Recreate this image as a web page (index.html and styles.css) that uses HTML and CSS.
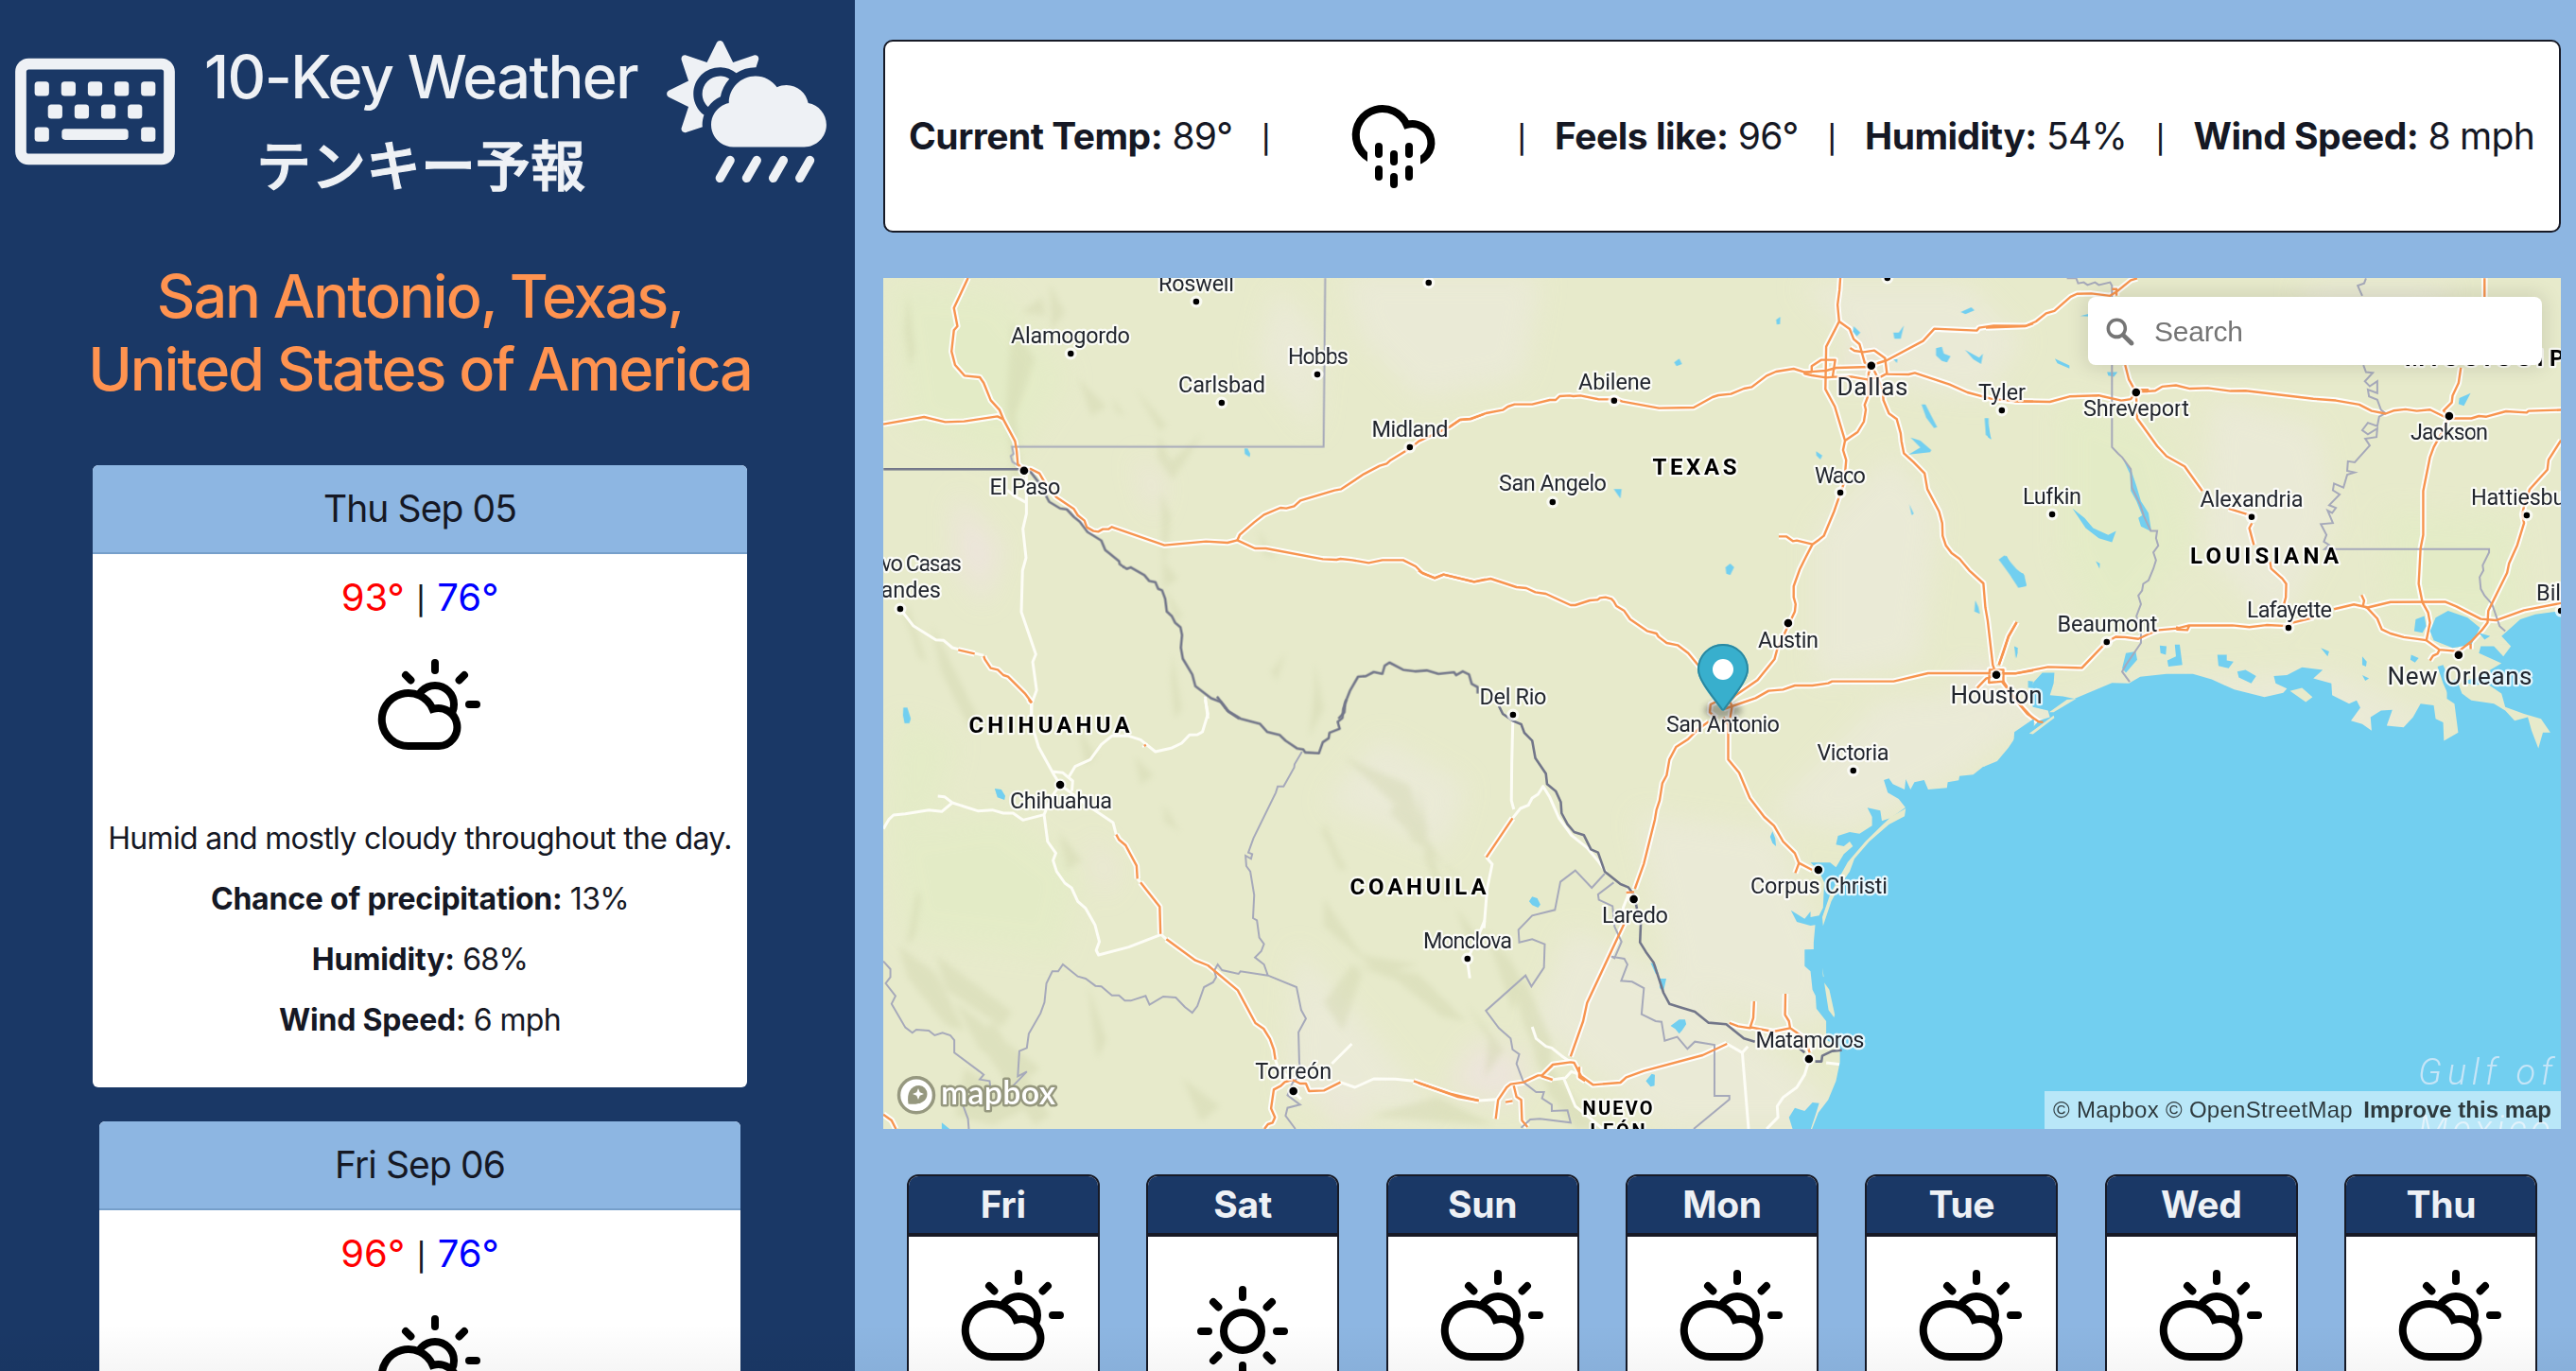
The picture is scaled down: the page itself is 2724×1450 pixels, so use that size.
FILE: index.html
```html
<!DOCTYPE html>
<html lang="en">
<head>
<meta charset="utf-8">
<title>10-Key Weather</title>
<link rel="stylesheet" href="styles.css">
</head>
<body>
<svg class="sprite" width="0" height="0" aria-hidden="true">
  <symbol id="cloud-sun" viewBox="0 0 200 200">
    <g transform="translate(56 35)" fill="none" stroke="#000" stroke-width="8" stroke-linecap="round">
      <circle cx="60" cy="48" r="20"/>
      <path d="M60 4v8M96 48h8M29 17l5.4 5.4M91 17l-5.4 5.4"/>
      <path fill="#fff" d="M32 92A28 28 0 1 1 57.5 52.9A20 20 0 1 1 64 92Z"/>
    </g>
  </symbol>
  <symbol id="sun" viewBox="0 0 200 200">
    <g fill="none" stroke="#000" stroke-width="8" stroke-linecap="round">
      <circle cx="100" cy="100" r="20"/>
      <path d="M100 56v8M100 136v8M56 100h8M136 100h8M69 69l5.4 5.4M131 69l-5.4 5.4M69 131l5.4-5.4M131 131l-5.4-5.4"/>
    </g>
  </symbol>
  <symbol id="rain" viewBox="0 0 200 200">
    <g transform="translate(56 67)" fill="none" stroke="#000" stroke-width="8" stroke-linecap="round">
      <path d="M32 60A28 28 0 1 1 57.5 20.9A20 20 0 1 1 64 60"/>
      <path fill="#fff" stroke="none" d="M16 42h56v30H16z"/>
      <path d="M28 44v8M60 44v8M44 52v8M28 68v8M60 68v8M44 76v8"/>
    </g>
  </symbol>
</svg>

<div class="app">
  <aside class="sidebar">
    <header class="brand">
      <svg class="brand-icon" viewBox="0 0 576 512">
        <path fill-rule="evenodd" d="M528 64H48C21.5 64 0 85.500 0 112v288c0 26.500 21.500 48 48 48h480c26.500 0 48-21.500 48-48V112c0-26.500-21.500-48-48-48zm8 336c0 4.400-3.600 8-8 8H48c-4.400 0-8-3.600-8-8V112c0-4.400 3.600-8 8-8h480c4.400 0 8 3.600 8 8v288z"/>
        <rect x="70" y="148" width="52" height="52" rx="12"/><rect x="166" y="148" width="52" height="52" rx="12"/><rect x="262" y="148" width="52" height="52" rx="12"/><rect x="358" y="148" width="52" height="52" rx="12"/><rect x="454" y="148" width="52" height="52" rx="12"/>
        <rect x="118" y="230" width="52" height="52" rx="12"/><rect x="214" y="230" width="52" height="52" rx="12"/><rect x="310" y="230" width="52" height="52" rx="12"/><rect x="406" y="230" width="52" height="52" rx="12"/>
        <rect x="70" y="312" width="52" height="52" rx="12"/><rect x="168" y="318" width="240" height="40" rx="12"/><rect x="454" y="312" width="52" height="52" rx="12"/>
      </svg>
      <div class="brand-title">
        <h1>10-Key Weather</h1>
        <h2 lang="ja">テンキー予報</h2>
      </div>
      <svg class="brand-icon" viewBox="0 0 576 512">
        <path d="M510.500 225.500c-6.900-37.200-39.300-65.500-78.500-65.500-12.300 0-23.900 3-34.300 8-17.400-24.100-45.600-40-77.700-40-53 0-96 43-96 96 0 .5.2 1.100.2 1.600C187.600 233 160 265.200 160 304c0 44.200 35.800 80 80 80h256c44.200 0 80-35.800 80-80 0-39.200-28.200-71.700-65.500-78.500zm-386.400 34.400c-37.400-37.400-37.400-98.300 0-135.800 34.600-34.600 89.100-36.800 126.700-7.400 20-12.900 43.600-20.700 69.200-20.700.7 0 1.300.2 2 .2l8.900-26.700c3.400-10.200-6.300-19.800-16.500-16.400l-75.300 25.100-35.500-71c-4.800-9.600-18.500-9.600-23.300 0l-35.500 71-75.300-25.100c-10.200-3.400-19.800 6.300-16.400 16.500l25.100 75.300-71 35.500c-9.600 4.800-9.600 18.500 0 23.300l71 35.500-25.100 75.300c-3.400 10.200 6.300 19.800 16.500 16.500l59.200-19.700c-.2-2.400-.7-4.700-.7-7.200 0-12.500 2.300-24.500 6.200-35.900-3.600-2.700-7.100-5.200-10.200-8.300zm69.800-58c4.300-24.500 15.800-46.400 31.900-64-9.800-6.200-21.400-9.900-33.800-9.900-35.300 0-64 28.700-64 64 0 18.700 8.200 35.400 21.100 47.100 11.300-15.900 26.600-28.900 44.800-37.200z"/>
        <path fill="none" stroke="#eef1f5" stroke-width="32" stroke-linecap="round" d="M516.600 432l-36.600 64M420.600 432l-36.600 64M324.600 432l-36.600 64M228.600 432l-36.600 64"/>
      </svg>
    </header>
    <h2 class="city">San Antonio, Texas,<br>United States of America</h2>
    <article class="card">
      <div class="card-date">Thu Sep 05</div>
      <div class="card-body">
        <p class="temps"><span class="hi">93°</span> <i>|</i> <span class="lo">76°</span></p>
        <svg class="weather"><use href="#cloud-sun"/></svg>
        <p>Humid and mostly cloudy throughout the day.</p>
        <p><b>Chance of precipitation:</b> 13%</p>
        <p><b>Humidity:</b> 68%</p>
        <p><b>Wind Speed:</b> 6 mph</p>
      </div>
    </article>
    <article class="card card-small">
      <div class="card-date">Fri Sep 06</div>
      <div class="card-body">
        <p class="temps"><span class="hi">96°</span> <i>|</i> <span class="lo">76°</span></p>
        <svg class="weather"><use href="#cloud-sun"/></svg>
      </div>
    </article>
  </aside>

  <main class="main">
    <section class="current">
      <span><b>Current Temp:</b> 89°</span><i>|</i>
      <svg class="weather"><use href="#rain"/></svg><i>|</i>
      <span><b>Feels like:</b> 96°</span><i>|</i>
      <span><b>Humidity:</b> 54%</span><i>|</i>
      <span><b>Wind Speed:</b> 8 mph</span>
    </section>

    <section class="map">
      <svg class="map-canvas" viewBox="934 294 1774 900">
        <defs>
          <filter id="soft" x="-20%" y="-20%" width="140%" height="140%"><feGaussianBlur stdDeviation="14"/></filter>
          <filter id="shade" x="-20%" y="-20%" width="140%" height="140%"><feGaussianBlur stdDeviation="3"/></filter>
          <filter id="small-soft" x="-50%" y="-50%" width="200%" height="200%"><feGaussianBlur stdDeviation="3"/></filter>
          <g id="highways">
            <g transform="translate(920 280) scale(.41454 .33333)">
              <path d="M250 42L232 90 214 137 223 195 214 208 208 275 217 318 241 352 280 357 290 375 308 430 330 460 340 490 370 560 374 590 377 633 393 650 410 648 432 662 450 700 475 737 520 775 530 795 547 812 553 833 570 845 582 847 594 839 608 839 617 832 751 890 857 878 912 882 937 874 982 900 1010 900 1155 934 1190 936 1200 933 1230 937 1272 946 1307 937 1360 937 1392 957 1408 977 1440 994 1463 983 1540 1006 1570 998"/>
              <path d="M34 506L138 483 192 499 240 497 325 481 340 490"/>
              <path d="M937 874L943 857 980 817 1005 793 1047 771 1062 773 1082 766 1098 748 1185 716 1202 712 1260 664 1300 638 1318 631 1328 620 1377 583 1400 560 1480 514 1505 492 1532 489 1568 473"/>
              <path d="M225 1222L267 1234M290 1242L293 1252 308 1280 326 1285 340 1302 352 1307 395 1360 413 1390"/>
            </g>
            <g transform="translate(1500 280) scale(.41454 .33333)">
              <path d="M80 514L106 492 135 489 172 471 215 461 228 450 245 443 290 443 335 429 350 429 360 417 385 415 395 417 413 415 460 427 485 427 499 424 520 434 613 455 702 453 750 420 765 414 797 410 830 393 850 388 888 352 912 339 957 330 985 341 1040 336 1065 327 1155 324"/>
              <path d="M0 970L12 980 42 994 64 983 143 1006 184 996 250 1023 275 1026 298 1039 325 1044 388 1080 400 1080 437 1065 457 1063 463 1057 477 1055 492 1060 498 1068 505 1083 524 1097 540 1125 583 1162 607 1170 612 1180 633 1200 661 1207 688 1232 720 1280 765 1390"/>
              <path d="M1076 42L1074 80 1069 127 1073 180 1040 260 1038 395 1062 450 1088 558 1083 588 1091 620 1086 690 1060 783 1034 860 1022 872 1005 887 987 930 973 965 957 1020 957 1055 962 1077 960 1100 943 1145 915 1220 908 1252 865 1318 810 1365 778 1405"/>
              <path d="M1073 180L1100 204 1110 236 1125 252 1138 310 1155 322 1148 345 1148 412 1138 445 1141 460 1136 498 1120 531 1088 558"/>
              <path d="M1155 320L1172 312 1195 303 1287 242 1316 203 1424 209 1430 200 1467 193 1550 194 1568 186"/>
              <path d="M1101 264L1112 273 1135 277 1163 272 1190 296 1195 345 1180 355 1145 364 1104 355 1060 356 1040 358 1003 351 985 346 985 341 1003 340 1003 322 1027 302 1063 302 1056 358M1195 347L1250 348 1266 343 1355 380 1400 405 1460 425 1530 434 1568 434"/>
              <path d="M1155 320L1166 345 1184 395 1186 430 1200 472 1220 490 1230 535 1232 560 1238 598 1262 625 1291 662 1298 712 1328 783 1336 820 1337 860 1345 890 1360 915 1380 933 1405 970 1441 1011 1446 1087 1452 1130 1465 1270 1474 1300M1480 1270L1492 1230 1505 1180 1526 1134"/>
              <path d="M919 862L938 862 955 877 965 875 1005 887"/>
              <path d="M778 1410L860 1375 893 1352 930 1348 960 1335 1005 1335 1045 1328 1055 1322 1212 1322 1300 1296 1450 1296 1474 1297 1522 1297 1568 1287M1457 1285H1492V1322L1455 1326ZM1474 1300L1448 1313 1425 1343M1488 1322L1530 1390 1568 1440"/>
              <path d="M765 1383L745 1395 743 1420 760 1438M790 1378L800 1400 795 1438"/>
            </g>
            <g transform="translate(2100 280) scale(.39796 .35714)">
              <path d="M0 186L105 182 133 168 160 144 182 137 225 95 242 86 280 85 330 92 347 80 385 46 402 40M347 92V72H335M1325 40V95M370 297L380 340 399 378 402 455 455 537 480 567 528 597 575 670"/>
              <path d="M75 404L170 406 222 390 300 387 360 402 385 398 399 376 430 375 450 373 468 361 505 357 542 367 590 365 650 374 690 373 870 397 930 402 992 414 1025 433 1062 441 1083 432 1115 428 1145 433 1180 429 1218 450 1240 455 1290 455 1310 448 1330 450 1382 434 1437 438 1442 433 1528 430M399 370L430 370 430 377"/>
              <path d="M1262 305L1256 350 1240 388 1238 408 1216 432 1231 450 1210 500 1190 540 1180 570 1162 670 1162 800 1155 840 1150 945 1160 1000 1175 1030 1180 1060 1170 1115"/>
              <path d="M1528 520L1495 578 1492 607 1445 665 1430 715 1425 740 1430 765 1412 830 1390 885 1385 912 1335 1025 1333 1060 1318 1082 1290 1115 1256 1145M1288 1122V1138"/>
              <path d="M645 722L706 743M707 765L700 780 712 830M755 880L758 900 788 930 798 945 797 985 792 1005M804 1070L815 1060 870 1045M925 1020L978 1006 1015 1015 1075 999 1220 998 1250 1012 1315 1049 1355 1053 1430 1023 1528 1002M998 978L1005 995 1002 1010 1015 1018 1040 1048 1052 1080 1075 1092 1110 1103 1170 1112 1205 1140 1256 1145M1205 1140L1200 1152 1188 1158 1180 1172"/>
              <path d="M27 1210L80 1210 165 1191 255 1194 321 1117 345 1102 370 1103 405 1108 435 1092 460 1082 508 1077 540 1068 655 1068 700 1073 745 1067 804 1070M508 1071V1080L535 1082 540 1070M35 1185L45 1150 60 1100 82 1058M45 1232L80 1290 110 1330 140 1353 152 1355"/>
            </g>
            <g transform="translate(920 740) scale(.41454 .33333)">
              <path d="M628 428L635 444 652 462 680 527 682 568M690 580L739 657 741 743M756 760L830 827 862 843 938 922 983 1026 1004 1044 1020 1076 1030 1110 1034 1142M700 142L703 148M34 1316L55 1335 66 1362M1006 1362L1015 1347 1027 1342 1033 1325 1023 1297 1030 1237 1048 1225 1058 1213 1078 1206 1097 1218 1112 1218 1120 1242 1158 1240 1200 1214M1387 1210L1500 1260 1553 1272M405 0L411 10"/>
            </g>
            <g transform="translate(1500 740) scale(.41454 .33333)">
              <path d="M740 70L715 92 688 125 657 150 640 190 633 240 622 265 615 320 607 350 603 380 575 520 552 600M525 710L430 962 420 1020 388 1132M778 55L790 80 790 190 818 232 845 312 882 372 907 400 930 450 960 487 970 518 1004 540M970 520L961 550M530 612L550 610"/>
              <path d="M240 376L173 500M0 1216L80 1250 153 1272M197 1330L203 1270 225 1230 235 1220 268 1214 305 1192 315 1192 342 1158 388 1150 397 1152 415 1195 445 1222 515 1215 530 1198 575 1178 725 1128 787 1092M313 1194L342 1206M315 1192L342 1160M410 1165V1198L425 1210M243 1225L250 1260 262 1270 264 1335 278 1356M222 1277L240 1273"/>
              <path d="M793 1026L815 1036 845 1042 850 1040 905 1053 948 1042 985 1074 998 1120M846 1040L854 1010 856 957M948 1042L945 1020 935 1000 936 933"/>
            </g>
          </g>
        </defs>

        <rect class="land" x="934" y="294" width="1774" height="900"/>

        <g class="pale" filter="url(#soft)">
          <path d="M1420 290h210l-20 110-110 20-60-60zM1900 300h180l60 60-40 60-90-10zM1920 560l80-80 50 60-20 160-110 20zM1990 740l160-10 10 20-90 70-120 60-80-20zM1730 860l150 20 60 150-20 60-150-50zM1660 980l120 60 130 100 50 54h-200l-140-110zM2140 760l130-40 200-10 120 60-100 20h-340zM2340 420l110 30 20 100-60 120-80-90zM1370 1000l70 80 80 100-160-20zM1400 850l60-70 90 50-20 70zM1350 300l50 60-10 100-60-80zM2430 300h170l-40 50-110 10z"/>
          <path class="rosy" d="M1010 520l50 60-20 60-30-50zM1080 340l30 40-10 40zM1200 480l30 30-10 40zM1560 1100l60 20-20 50-70-20zM1960 350l30 40-40 20zM2070 700l60 20-50 20zM1400 1150l50 30-40 10zM1150 880l30 40-10 30z"/>
          <path class="green" d="M940 880l120-20 80 60-20 90-160-20zM940 300l120 10 70 90-60 90-110-40zM2180 420l110 40 30 120-90 100-50-90zM2520 540l140 10 10 110-140-10zM950 760l60 20-20 80-50 20z"/>
        </g>

        <g class="hills" filter="url(#shade)">
          <path d="M960 310l8 60-6 20-6-40zM1070 340l24 40-20 60 6 60-8 20-8-90zM1080 330l22-16 4 20zM1140 400l30 30-16 10zM1110 300l16 30-14 20zM1200 410l34 40-8 6zM1226 460l12 28 34-30-32 50-16-24zM1228 520l10 26-6 50 14 16-16 10zM1176 420l14 20-10-4zM960 640l20 60-8-4-16-46zM985 660l50 100-10 10-30-60zM1230 620l20 30-6 10zM1240 690l10 60-8 10-4-40zM1330 560l20 30-14-4zM1360 690l-10 30-6-10zM1390 700l10 50-16 30 6-50z"/>
          <path d="M1200 800l20 20-14 10zM1230 850l18 30-16-10zM1420 800l70 30 24 70-20-10-20-40zM1400 870l24 50-8 0-18-40zM1480 840l50 80 20 10-30-20-50-50zM950 1000l40 30 30 60-20-6-40-50zM970 940l-12 60 10-10 6-40zM990 1010l80 60-10 16-60-40zM1010 1060l90 70-14 10-50-30zM1020 1130l70 40-40 20-40-10zM1050 1080l60 100-16 10-60-90zM1400 950l40 60 60 10-40 10-60-50zM1430 1020l70 10 50 50-24-4-50-40zM1400 1060l30-40 10 10-20 60zM1250 1140l40 30-20 16zM1450 1180l70-20 60 30-60-4zM1150 1040l20 60-10 20zM1120 880l24 30-16 10zM1140 770l20 30-12 10z"/>
          <path d="M1500 830l10 50-6 10zM1508 890l24 60-10-4-16-40zM1570 980l40 60-10 30-14-40zM1590 1000l40 80 10 70-30-70zM1610 1030l30 70 0 60-16-40zM1550 1060l40 50-20 30 4-40zM1640 1130l50 64h-24l-30-40zM1540 960l30 40-16 4z"/>
        </g>

        <g class="roads-minor">
          <g transform="translate(920 280) scale(.41454 .33333)">
            <path d="M77 1092L110 1145 168 1190 188 1192 210 1215 290 1240M413 1390L425 1350 415 1260 423 1236 386 1102 389 970 398 930 390 838 399 790V755L370 735 350 715M399 755V670M855 1370L862 1440M413 1390L411 1440"/>
          </g>
          <g transform="translate(920 740) scale(.41454 .33333)">
            <path d="M411 10L413 80 430 150 470 240 485 270 507 290 560 340 620 390 628 428M507 245L523 212 562 190 590 142 617 115 660 115 690 127 728 165 768 154 795 138 815 112 835 111 848 102 862 45 855 0M465 228L492 232 517 258 515 290M485 270L462 310 444 365 390 382 365 360 340 360 312 350 275 353 210 327 190 308 173 306M210 327L183 355 150 350 90 362 60 366 48 380 34 410M444 365L453 450 474 487 467 510 476 545 497 582 514 597 530 640 550 662 574 715 585 768 577 795 583 810 660 785 741 746M682 568L690 580M741 743L756 760M1034 1142L1040 1165 1060 1190 1078 1206M1200 1214L1237 1230 1285 1203 1340 1204 1387 1210M1229 1092L1178 1155M1524 830L1530 884M1524 822L1545 770 1568 700M1078 1242L1100 1268"/>
          </g>
          <g transform="translate(1500 740) scale(.41454 .33333)">
            <path d="M241 50L238 200 237 320 243 348M240 376L260 345 280 335 290 312 305 300 318 275 335 310 358 375 390 430 430 470 460 515 480 550M173 500L188 522 175 600 167 725M525 710L522 660 535 620M290 1038L300 1075 325 1100 340 1105 365 1130 388 1150M370 1200L400 1290 440 1330 470 1362M340 1206L375 1200 390 1180 412 1190M153 1272L200 1268M826 1120L842 1362M787 1092L826 1120 840 1100M996 1145L985 1190 965 1230 930 1262 915 1290 917 1325 888 1362M1040 1152L1076 1157"/>
          </g>
        </g>

        <use href="#highways" class="casing"/>

        <g class="water">
          <path transform="translate(1500 740) scale(.41454 .33333)" d="M1570 60L1520 103 1518 140 1505 165 1475 205 1440 213 1415 238 1380 242 1378 256 1350 262 1348 280 1300 285 1290 255 1265 262 1255 285 1243 252 1240 285 1210 268 1200 250 1187 255 1197 295 1225 315 1242 342 1205 375 1182 385 1178 352 1145 343 1157 372 1157 400 1125 425 1100 420 1070 432 1065 460 1085 465 1100 450 1108 465 1085 490 1065 532 1050 517 1000 517 1020 540 1035 580 1032 660 1022 685 1000 690 1000 672 985 695 950 668 965 705 1000 717 1012 715 1008 770 1008 792 985 793 985 845 1000 862 1005 920 1013 940 1015 980 1040 1020 1040 1080 1075 1100 1075 1150 1065 1210 1045 1270 1020 1310 1003 1365 1570 1365ZM955 1365L945 1325 960 1295 985 1305 1005 1278 1022 1280 1012 1320 1000 1365Z"/>
          <path transform="translate(2100 280) scale(.39796 .35714)" d="M-2 1485L30 1470 60 1430 75 1405 78 1385 113 1385 140 1350 170 1340 165 1320 125 1310 112 1270 128 1235 150 1208 182 1208 180 1240 170 1275 205 1278 235 1285 335 1238 380 1240 410 1220 480 1212 550 1212 600 1228 660 1258 740 1280 790 1268 800 1255 770 1240 765 1218 800 1215 840 1192 895 1200 870 1225 918 1240 920 1275 965 1300 985 1290 995 1312 970 1350 1000 1360 1025 1380 1022 1340 1050 1320 1080 1318 1065 1365 1110 1370 1135 1340 1155 1300 1190 1305 1195 1345 1215 1355 1217 1410 1255 1385 1245 1300 1225 1285 1225 1245 1250 1225 1265 1270 1290 1290 1350 1300 1380 1320 1405 1350 1440 1340 1450 1380 1468 1432 1480 1385 1500 1385 1475 1345 1430 1330 1380 1310 1370 1270 1330 1240 1300 1245 1265 1235 1310 1220 1340 1200 1370 1180 1310 1150 1315 1130 1350 1130 1375 1160 1395 1130 1370 1100 1385 1085 1420 1050 1460 1035 1530 1025 1530 1570-2 1570Z"/>
          <rect x="2098" y="836" width="612" height="360"/>
          <path transform="translate(2100 280) scale(.39796 .35714)" d="M1228 1025L1280 1045 1313 1075 1290 1125 1240 1135 1190 1112 1180 1085 1195 1045ZM1142 1050L1165 1040 1170 1070 1160 1090 1138 1085ZM372 1150L398 1145 402 1170 372 1208 362 1195ZM462 1128L480 1130 478 1155 464 1150ZM502 1125L515 1125 522 1185 485 1190 482 1172 505 1160ZM615 1155L640 1155 640 1172 658 1175 645 1195 618 1188ZM668 1205L690 1200 718 1218 705 1240 672 1222ZM890 1135L912 1145 908 1160ZM1000 1160L1012 1175 1010 1190 1000 1185ZM1130 1155L1150 1165 1140 1178 1128 1170ZM1000 1215L1018 1225 1008 1232ZM362 570L385 605 400 655 412 700 432 735 440 790 412 775 405 750 415 742 400 700 385 670 383 620ZM230 722L262 750 285 780 325 800 346 788 335 822 300 810 265 780ZM35 875L55 862 75 905 100 915 108 950 88 955 68 925 60 890ZM183 278L222 298 222 307 190 292ZM0 455L8 480 14 518 5 510ZM322 318L350 318 340 332 325 328ZM1258 395L1288 380 1270 418 1256 412ZM292 878L303 885 302 900ZM75 1130L85 1135 82 1165ZM1310 1090L1340 1100 1325 1110ZM250 152L275 145 275 153ZM1200 1190L1215 1185 1240 1250 1250 1290 1235 1290 1215 1240Z"/>
          <path transform="translate(1500 280) scale(.41454 .33333)" d="M652 310L665 298 672 315 658 322ZM912 175L923 165 922 188 914 190ZM1110 195L1127 215 1118 227 1108 212ZM1383 150L1410 135 1418 145 1395 157ZM1211 215L1225 215 1238 193 1230 235 1214 235ZM1212 300L1222 300 1220 312ZM1320 265L1335 260 1340 282 1357 290 1348 310 1335 305 1320 288ZM1394 270L1430 295 1440 282 1435 315 1415 300ZM1283 443L1293 443 1323 515 1315 518 1295 485ZM1444 487H1454L1455 540 1462 553 1447 540ZM1255 548L1280 558 1308 588 1305 595 1250 602 1280 580ZM1014 592L1030 605 1025 618 1015 605ZM498 712L518 712 515 742 508 730ZM783 960L795 948 805 960 795 985 785 980ZM1252 760L1263 790 1258 795ZM1480 935L1495 922 1525 965 1545 985 1550 1020 1530 1025 1512 990ZM1420 1065L1428 1085 1432 1108 1418 1100ZM1521 1210L1528 1230 1523 1250ZM1555 1320L1568 1322 1568 1345 1555 1342Z"/>
          <path transform="translate(920 280) scale(.41454 .33333)" d="M955 583L963 583 970 600 968 610 956 600ZM85 1405L95 1405 104 1440 100 1455 88 1455 84 1430Z"/>
          <path transform="translate(920 740) scale(.41454 .33333)" d="M318 282L335 285 345 305 343 318 325 310ZM183 1342L203 1362 183 1362Z"/>
          <path transform="translate(1500 740) scale(.41454 .33333)" d="M282 640L290 625 303 630 311 650 305 660 290 652ZM643 1035L665 1015 680 1015 683 1030 672 1050 665 1060 655 1045ZM580 1210L595 1187 603 1190 602 1225 592 1228ZM903 418L910 440 912 465 903 455 897 435ZM592 835L605 840 612 870 605 870ZM615 885H632L625 925 615 915Z"/>
        </g>
        <g class="land">
          <path transform="translate(1500 740) scale(.41454 .33333)" d="M1243 345L1240 370 1200 396 1150 450 1112 505 1100 545 1075 590 1053 640 1032 718 1030 690 1050 618 1075 560 1095 515 1140 450 1185 395 1205 372ZM1035 898L1048 920 1062 1000 1060 1008 1046 985ZM1030 850L1034 880 1032 878Z"/>
          <path transform="translate(2100 280) scale(.39796 .35714)" d="M808 1262L840 1253 868 1280 850 1295ZM115 1388L180 1335 182 1342 125 1390ZM168 1325L215 1288 240 1285 180 1325ZM1265 1180L1290 1195 1280 1205ZM1330 1210L1340 1200 1340 1215Z"/>
        </g>

        <g class="border-state">
          <g transform="translate(920 280) scale(.41454 .33333)">
            <path d="M1161 42L1157 577H362L366 600 359 607 363 625 378 637"/>
          </g>
          <g transform="translate(2100 280) scale(.39796 .35714)">
            <path d="M215 40L240 40 245 55 260 52 270 60 290 52 300 60 330 52 335 62V540L352 560 362 570 385 605 388 660 410 710 420 745 438 788 455 788 452 810 458 832 445 852 452 875 445 900 432 935 418 945 415 965 405 980 412 1005 400 1040 412 1085 412 1120 372 1185 362 1205 382 1235"/>
            <path d="M1010 40L1005 55 988 62 1000 92M1003 297L1010 318 1028 320 1007 345 1020 360 1040 345 1040 380 1015 370 1018 390 1040 400 1050 430 1062 440 1045 450 1040 478 1015 468 1000 490 1015 502 1040 485 1038 510 1008 515 1020 535 980 585 962 582 960 610 980 615 960 622 950 660 925 648 922 668 940 680 912 712 930 720 920 735 908 728 922 765 890 768 905 800 898 820 912 830 900 842H1337V852L1320 890 1322 905 1312 925 1315 960 1325 980 1345 1005 1365 1070 1380 1085"/>
          </g>
          <g transform="translate(920 740) scale(.41454 .33333)">
            <path d="M1102 165L1083 205 1082 215 1055 275 1040 275 1035 295 978 440 965 485 975 490 972 505 958 495 960 528 970 545 980 620 977 693 987 700 993 755 1005 775 998 798 982 818 1005 840 1015 875 945 862 940 870 898 858 887 840 878 860 883 880 875 897 852 912 835 972 822 993 803 975 780 945 748 942 713 968 703 940 665 955 650 955 635 938 617 938 590 910 575 908 550 885 530 878 492 840 480 862 465 862 450 900 445 960 435 995 405 1060 400 1105 381 1115 377 1195 400 1180 365 1225M1015 875L1088 912 1100 985 1112 1012 1093 1055 1095 1150 1100 1190 1078 1215 1065 1255 1097 1285 1065 1295 1060 1320 1085 1362M34 830L52 855 52 880 40 900 65 940 55 965 90 1040 108 1057 118 1047 150 1050 165 1065 185 1057 205 1065 215 1080 215 1120 280 1180 290 1190 280 1205 305 1210 308 1240 245 1245 235 1280 250 1330 252 1362"/>
          </g>
          <g transform="translate(1500 740) scale(.41454 .33333)">
            <path d="M475 552L442 597 400 542 362 578 348 667 290 685 255 730 257 770 290 760 322 776 320 850 288 910 273 875 172 987 205 1042 235 1075 240 1110 257 1125 250 1155 268 1214 300 1245 320 1245 315 1265 340 1285 340 1305 380 1303 388 1342 310 1330 285 1332 262 1358M498 580L458 618 460 635 495 655 500 720 518 768 500 820 492 815 525 822 533 840 517 892 545 895 575 915 569 998 605 1020 620 1022 628 1082 660 1070 686 1108 705 1085 755 1095V1257H793V1268L702 1362"/>
          </g>
        </g>
        <g class="border-country">
          <path transform="translate(920 280) scale(.41454 .33333)" d="M34 648H393L410 658 430 690 450 735 457 752 485 773 502 776 520 800 535 815 555 848 590 875 600 905 635 940 637 950 655 965 665 960 700 985 712 1003 728 1007 735 1028 745 1033 753 1060 757 1100 770 1115 778 1135 792 1150 796 1175 793 1215 798 1250 822 1300 830 1337 870 1375 895 1387 912 1415 942 1440M1195 1440L1210 1420 1212 1390 1225 1350 1245 1307 1265 1305 1285 1292 1307 1298 1313 1272 1325 1262 1360 1285 1390 1290 1420 1287 1450 1298 1490 1293 1495 1302 1512 1290 1528 1300 1535 1330 1550 1340V1360"/>
          <path transform="translate(920 740) scale(.41454 .33333)" d="M885 -10L915 38 945 60 995 77 1013 102 1045 112 1060 130 1090 155 1105 158 1110 167 1145 170 1155 135 1170 122 1172 105 1198 92 1193 70 1205 58 1207 30 1215 0"/>
          <path transform="translate(1500 740) scale(.41454 .33333)" d="M205 20L215 45 242 68 262 78 270 105 290 130 298 185 325 235 328 268 350 290 363 325 365 360 380 395 397 420 422 430 440 475 458 485 475 545 515 585 535 595 550 620 560 680 567 710 565 770 580 800 600 835 612 880 625 930 640 965 665 975 705 990 740 1025 785 1030 830 1075 858 1085M970 1105L985 1120M1012 1148L1028 1148 1030 1130 1055 1115 1080 1112"/>
        </g>

        <use href="#highways" class="highway"/>

        <g class="halo-dots">
          <path transform="translate(920 280) scale(.41454 .33333)" d="M832 117h.1M512 282h.1M1141 348h.1M897 438h.1M1377 579h.1M1425 57h.1M77 1092h.1M393 653h.1"/>
          <path transform="translate(1500 280) scale(.41454 .33333)" d="M499 431h.1M1488 462h.1M342 753h.1M1076 723h.1M241 1428h.1M1196 42h.1M943 1137h.1M1155 320h.1M1474 1301h.1"/>
          <path transform="translate(920 740) scale(.41454 .33333)" d="M485 270h.1M1080 1242h.1M1524 822h.1"/>
          <path transform="translate(1500 740) scale(.41454 .33333)" d="M1109 225h.1M1020 540h.1M549 633h.1M996 1140h.1"/>
          <path transform="translate(2100 280) scale(.39796 .35714)" d="M176 739h.1M706 747h.1M1437 742h.1M804 1075h.1M321 1117h.1M1528 1025h.1M399 378h.1M1231 448h.1M1256 1156h.1"/>
        </g>
        <g class="dots">
          <path transform="translate(920 280) scale(.41454 .33333)" d="M832 117h.1M512 282h.1M1141 348h.1M897 438h.1M1377 579h.1M1425 57h.1M77 1092h.1"/>
          <path transform="translate(1500 280) scale(.41454 .33333)" d="M499 431h.1M1488 462h.1M342 753h.1M1076 723h.1M241 1428h.1M1196 42h.1"/>
          <path transform="translate(920 740) scale(.41454 .33333)" d="M1524 822h.1"/>
          <path transform="translate(1500 740) scale(.41454 .33333)" d="M1109 225h.1"/>
          <path transform="translate(2100 280) scale(.39796 .35714)" d="M176 739h.1M706 747h.1M1437 742h.1M804 1075h.1M321 1117h.1M1528 1025h.1"/>
        </g>
        <g class="dots dots-large">
          <path transform="translate(920 280) scale(.41454 .33333)" d="M393 653h.1"/>
          <path transform="translate(1500 280) scale(.41454 .33333)" d="M943 1137h.1M1155 320h.1M1474 1301h.1"/>
          <path transform="translate(920 740) scale(.41454 .33333)" d="M485 270h.1M1080 1242h.1"/>
          <path transform="translate(1500 740) scale(.41454 .33333)" d="M1020 540h.1M549 633h.1M996 1140h.1"/>
          <path transform="translate(2100 280) scale(.39796 .35714)" d="M399 378h.1M1231 448h.1M1256 1156h.1"/>
        </g>

        <g class="labels">
          <text x="1265" y="308" textLength="80">Roswell</text>
          <text x="1132" y="362.700" textLength="126">Alamogordo</text>
          <text x="1394" y="384.700" textLength="64">Hobbs</text>
          <text x="1292" y="414.700" textLength="92">Carlsbad</text>
          <text x="1491" y="461.700" textLength="81">Midland</text>
          <text x="1084" y="523" textLength="75">El Paso</text>
          <text class="to-left" x="1017" y="603.700" textLength="123">Nuevo Casas</text>
          <text class="to-left" x="995" y="632">Grandes</text>
          <text x="1707.500" y="412.300" textLength="77">Abilene</text>
          <text x="2117" y="422.700" textLength="50">Tyler</text>
          <text x="1642" y="519.300" textLength="114">San Angelo</text>
          <text x="1946" y="510.500" textLength="54">Waco</text>
          <text x="1891" y="684.500" textLength="64">Austin</text>
          <text x="1600" y="744.500" textLength="71">Del Rio</text>
          <text x="1822" y="774" textLength="120">San Antonio</text>
          <text x="1959.500" y="803.700" textLength="76">Victoria</text>
          <text x="1923.500" y="944.700" textLength="145">Corpus Christi</text>
          <text x="1729" y="976" textLength="70">Laredo</text>
          <text x="1552" y="1003" textLength="94">Monclova</text>
          <text x="1914" y="1108" textLength="115">Matamoros</text>
          <text x="1367.700" y="1141" textLength="81">Torreón</text>
          <text x="1122" y="855" textLength="108">Chihuahua</text>
          <text x="2259" y="440" textLength="112">Shreveport</text>
          <text x="2590" y="465" textLength="82">Jackson</text>
          <text x="2170" y="533" textLength="62">Lufkin</text>
          <text x="2381" y="536" textLength="109">Alexandria</text>
          <text class="to-right" x="2613" y="534" textLength="120">Hattiesburg</text>
          <text class="to-right" x="2682" y="634.500">Biloxi</text>
          <text x="2421" y="652.500" textLength="90">Lafayette</text>
          <text x="2228.500" y="667.500" textLength="106">Beaumont</text>
          <text class="metro" x="1980" y="418" textLength="75">Dallas</text>
          <text class="metro" x="2111" y="744" textLength="97">Houston</text>
          <text class="metro" x="2601" y="723.600" textLength="153">New Orleans</text>
          <text class="state" x="1792" y="501.700" textLength="89">TEXAS</text>
          <text class="state" x="1499.500" y="946.300" textLength="144">COAHUILA</text>
          <text class="state" x="1109.500" y="775.300" textLength="170">CHIHUAHUA</text>
          <text class="state" x="2394.500" y="595.700" textLength="157">LOUISIANA</text>
          <text class="state to-right" x="2543" y="386.800" textLength="204">MISSISSIPPI</text>
          <text class="state state-small" x="1710.600" y="1178.700" textLength="74">NUEVO</text>
          <text class="state state-small" x="1710.600" y="1202.700" textLength="58">LEÓN</text>
          <text class="sea" x="2557" y="1146.700" textLength="142">Gulf of</text>
          <text class="sea" x="2557" y="1207" textLength="140">Mexico</text>
        </g>

        <ellipse cx="1822" cy="751" rx="20" ry="9" fill="#333" opacity=".38" filter="url(#small-soft)"/>
        <g transform="translate(1795 681) scale(2)">
          <path class="pin" d="M27 13.500C27 19.070 20.250 27 14.750 34.500C14.020 35.500 12.980 35.500 12.250 34.500C6.750 27 0 19.220 0 13.500C0 6.040 6.040 0 13.500 0C20.960 0 27 6.040 27 13.500Z"/>
          <path class="pin-edge" d="M26.500 13.500C26.500 18.800 19.800 26.700 14.300 34.200C13.900 34.900 13.100 34.900 12.700 34.200C7.200 26.700.5 19 .5 13.500C.5 6.300 6.300.5 13.500.5C20.700.5 26.500 6.300 26.500 13.500Z"/>
          <circle cx="13.500" cy="13.500" r="5.500" fill="#fff"/>
        </g>

        <g class="logo">
          <circle cx="969" cy="1158.300" r="18.500"/>
          <path class="logo-mark" d="M960.500 1167.500C958.500 1156 963 1148 972 1148A8.500 9 0 0 1 980.500 1157C980.500 1165 972 1169 960.500 1167.500Z"/>
          <path class="logo-star" d="M971 1151l1.700 4.300 4.300 1.700-4.300 1.700-1.700 4.300-1.700-4.300-4.300-1.700 4.300-1.700z"/>
          <text x="995" y="1167.700" textLength="121">mapbox</text>
        </g>
      </svg>

      <div class="search">
        <svg viewBox="0 0 18 18"><path d="M7.400 2.500c-2.700 0-4.900 2.200-4.900 4.900s2.200 4.900 4.900 4.900c1 0 1.800-.2 2.500-.8l3.700 3.700c.2.2.4.300.8.3.7 0 1.100-.4 1.100-1.100 0-.3-.1-.5-.3-.8L11.400 10c.4-.8.8-1.600.8-2.500.1-2.800-2.100-5-4.800-5zm0 1.600c1.800 0 3.200 1.400 3.200 3.200s-1.400 3.200-3.200 3.200-3.300-1.300-3.300-3.100 1.400-3.300 3.300-3.300z"/></svg>
        <span>Search</span>
      </div>
      <div class="attribution"><span>© Mapbox</span> <span>© OpenStreetMap</span> <b>Improve this map</b></div>
    </section>

    <section class="days">
      <div class="day"><h3>Fri</h3><svg class="weather"><use href="#cloud-sun"/></svg></div>
      <div class="day"><h3>Sat</h3><svg class="weather"><use href="#sun"/></svg></div>
      <div class="day"><h3>Sun</h3><svg class="weather"><use href="#cloud-sun"/></svg></div>
      <div class="day"><h3>Mon</h3><svg class="weather"><use href="#cloud-sun"/></svg></div>
      <div class="day"><h3>Tue</h3><svg class="weather"><use href="#cloud-sun"/></svg></div>
      <div class="day"><h3>Wed</h3><svg class="weather"><use href="#cloud-sun"/></svg></div>
      <div class="day"><h3>Thu</h3><svg class="weather"><use href="#cloud-sun"/></svg></div>
    </section>
  </main>
</div>
</body>
</html>
```
FILE: styles.css
```css
* { box-sizing: border-box; }
body {
  margin: 0;
  background: #8db6e2;
  color: #151824;
  font-family: Inter, "Liberation Sans", sans-serif;
  font-size: 32px;
  line-height: 48px;
}
h1, h2, h3, p { margin: 0; }
.sprite { position: absolute; }
.app {
  position: relative;
  display: flex;
  height: 1450px;
  overflow: hidden;
}
.app::after {
  content: "";
  position: absolute;
  inset: auto 0 0 0;
  height: 50px;
  background: linear-gradient(rgba(0, 0, 0, 0), rgba(0, 0, 0, .035));
}
.weather { display: block; width: 200px; height: 200px; flex: none; }

/* Sidebar */
.sidebar {
  width: 904px;
  flex: none;
  padding: 43px 16px 0 0;
  background: #1a3866;
  text-align: center;
}
.brand {
  display: flex;
  justify-content: space-between;
  height: 232px;
  padding: 0 14px 0 16px;
}
.brand-icon { width: 169px; height: 150px; fill: #eef1f5; flex: none; }
.brand-title { color: #eef1f5; white-space: nowrap; }
.brand-title h1 { font-size: 63px; line-height: 77px; font-weight: 500; letter-spacing: -1.550px; }
.brand-title h2 {
  margin-top: 7px;
  font: 500 58px/90px "Noto Sans CJK JP", sans-serif;
  -webkit-text-stroke: 1.200px #eef1f5;
}
.city {
  height: 217px;
  color: #ff9350;
  font-size: 63px;
  line-height: 76.500px;
  font-weight: 500;
  letter-spacing: -2.050px;
}
.card {
  width: 692px;
  height: 658px;
  margin: 0 auto 36px;
  border-radius: 6px;
  overflow: hidden;
  background: #fff;
}
.card-small { width: 678px; }
.card-date {
  height: 94px;
  padding-top: 22px;
  background: #8db6e2;
  border-bottom: 2px solid #769fca;
  font-size: 39px;
  letter-spacing: -.9px;
}
.card-body { padding-top: 22px; }
.card-body .weather { margin: 6px auto 1px; }
.card-body p { margin-bottom: 16px; letter-spacing: -.660px; white-space: nowrap; }
.card-body b { letter-spacing: -.200px; }
.card-body .temps { margin: 0; font-size: 40px; letter-spacing: 0; }
.temps i { margin: 0 1px; font-size: 29px; font-style: normal; font-weight: 500; line-height: 1; }
.hi { color: #f00; }
.lo { color: #00f; }

/* Main column */
.main {
  flex: 1;
  min-width: 0;
  padding: 42px 16px 0 30px;
  display: flex;
  flex-direction: column;
  gap: 48px;
}
.current {
  height: 204px;
  flex: none;
  padding: 0 26px 0 25px;
  display: flex;
  align-items: center;
  justify-content: space-between;
  border: 2px solid #171a26;
  border-radius: 10px;
  background: #fff;
  font-size: 39px;
  letter-spacing: -.750px;
  white-space: nowrap;
}
.current b { letter-spacing: -.500px; }
.current i { padding-top: 7px; font-size: 29px; font-style: normal; font-weight: 500; }

/* Map */
.map { position: relative; height: 900px; flex: none; }
.map-canvas { display: block; width: 1774px; height: 900px; }
.map-canvas path { vector-effect: non-scaling-stroke; }
.land { fill: #e7eacb; }
.pale { fill: #ebead9; opacity: .8; }
.rosy { fill: #eee4df; }
.green { fill: #e3ecc6; }
.hills { fill: #cdd2a8; opacity: .36; }
.water { fill: #72cff0; }
.roads-minor { fill: none; stroke: #fdfdf6; stroke-width: 3; stroke-linejoin: round; }
.casing { fill: none; stroke: #fff; stroke-width: 6.500; stroke-linejoin: round; opacity: .9; }
.highway { fill: none; stroke: #f7954f; stroke-width: 2.400; stroke-linejoin: round; }
.border-state { fill: none; stroke: #a6a9ba; stroke-width: 2; }
.border-country { fill: none; stroke: #727689; stroke-width: 2.600; stroke-linejoin: round; }
.dots { fill: none; stroke: #000; stroke-width: 6.500; stroke-linecap: round; }
.dots-large { stroke-width: 8.500; }
.halo-dots { fill: none; stroke: rgba(255, 255, 255, .75); stroke-width: 13; stroke-linecap: round; }
.labels {
  fill: #22262e;
  font: 400 23.500px Roboto, sans-serif;
  text-anchor: middle;
}
.labels text {
  paint-order: stroke;
  stroke: rgba(255, 255, 255, .8);
  stroke-width: 4.500px;
  stroke-linejoin: round;
}
.labels .metro { font-size: 26px; }
.labels .to-left { text-anchor: end; }
.labels .to-right { text-anchor: start; }
.labels .state { font-size: 24px; font-weight: 700; fill: #000; }
.labels .state-small { font-size: 20px; }
.labels .sea {
  fill: #c6e5f7;
  stroke: none;
  font-size: 38px;
  font-style: italic;
  font-weight: 300;
  text-anchor: start;
}
.pin { fill: #38afcd; }
.pin-edge { fill: none; stroke: #2b88a0; stroke-width: 2; }
.logo circle { fill: #fff; stroke: #96987f; stroke-width: 3.500; }
.logo-mark { fill: #96987f; }
.logo-star { fill: #fff; }
.logo text {
  fill: #fff;
  font: 600 34px Lato, sans-serif;
  paint-order: stroke;
  stroke: #96987f;
  stroke-width: 5px;
  stroke-linejoin: round;
}
.search {
  position: absolute;
  top: 20px;
  right: 20px;
  width: 480px;
  height: 72px;
  padding: 2px 0 0 14px;
  display: flex;
  align-items: center;
  gap: 16px;
  border-radius: 8px;
  background: #fff;
  box-shadow: 0 0 20px 4px rgba(0, 0, 0, .1);
  color: #757575;
  font: 30px/36px "Liberation Sans", sans-serif;
  letter-spacing: -.200px;
}
.search svg { width: 40px; height: 40px; fill: #757575; }
.attribution {
  position: absolute;
  right: 0;
  bottom: 0;
  width: 546px;
  height: 40px;
  padding: 0 10px 0 9px;
  display: flex;
  gap: 7px;
  background: rgba(255, 255, 255, .5);
  color: rgba(0, 0, 0, .75);
  font: 24px/40px "Liberation Sans", sans-serif;
  white-space: nowrap;
}
.attribution span { letter-spacing: .280px; }
.attribution b { margin-left: auto; }

/* Daily strip */
.days {
  flex: none;
  display: grid;
  grid-template-columns: repeat(7, 1fr);
  justify-items: center;
}
.day {
  width: 204px;
  height: 330px;
  border: 2px solid #171a26;
  border-radius: 12px;
  overflow: hidden;
  background: #fff;
}
.day h3 {
  height: 64px;
  padding-top: 6px;
  background: #1a3866;
  border-bottom: 4px solid #171a26;
  color: #eef1f5;
  font-size: 39px;
  font-weight: 700;
  letter-spacing: -.300px;
  text-align: center;
}
```
